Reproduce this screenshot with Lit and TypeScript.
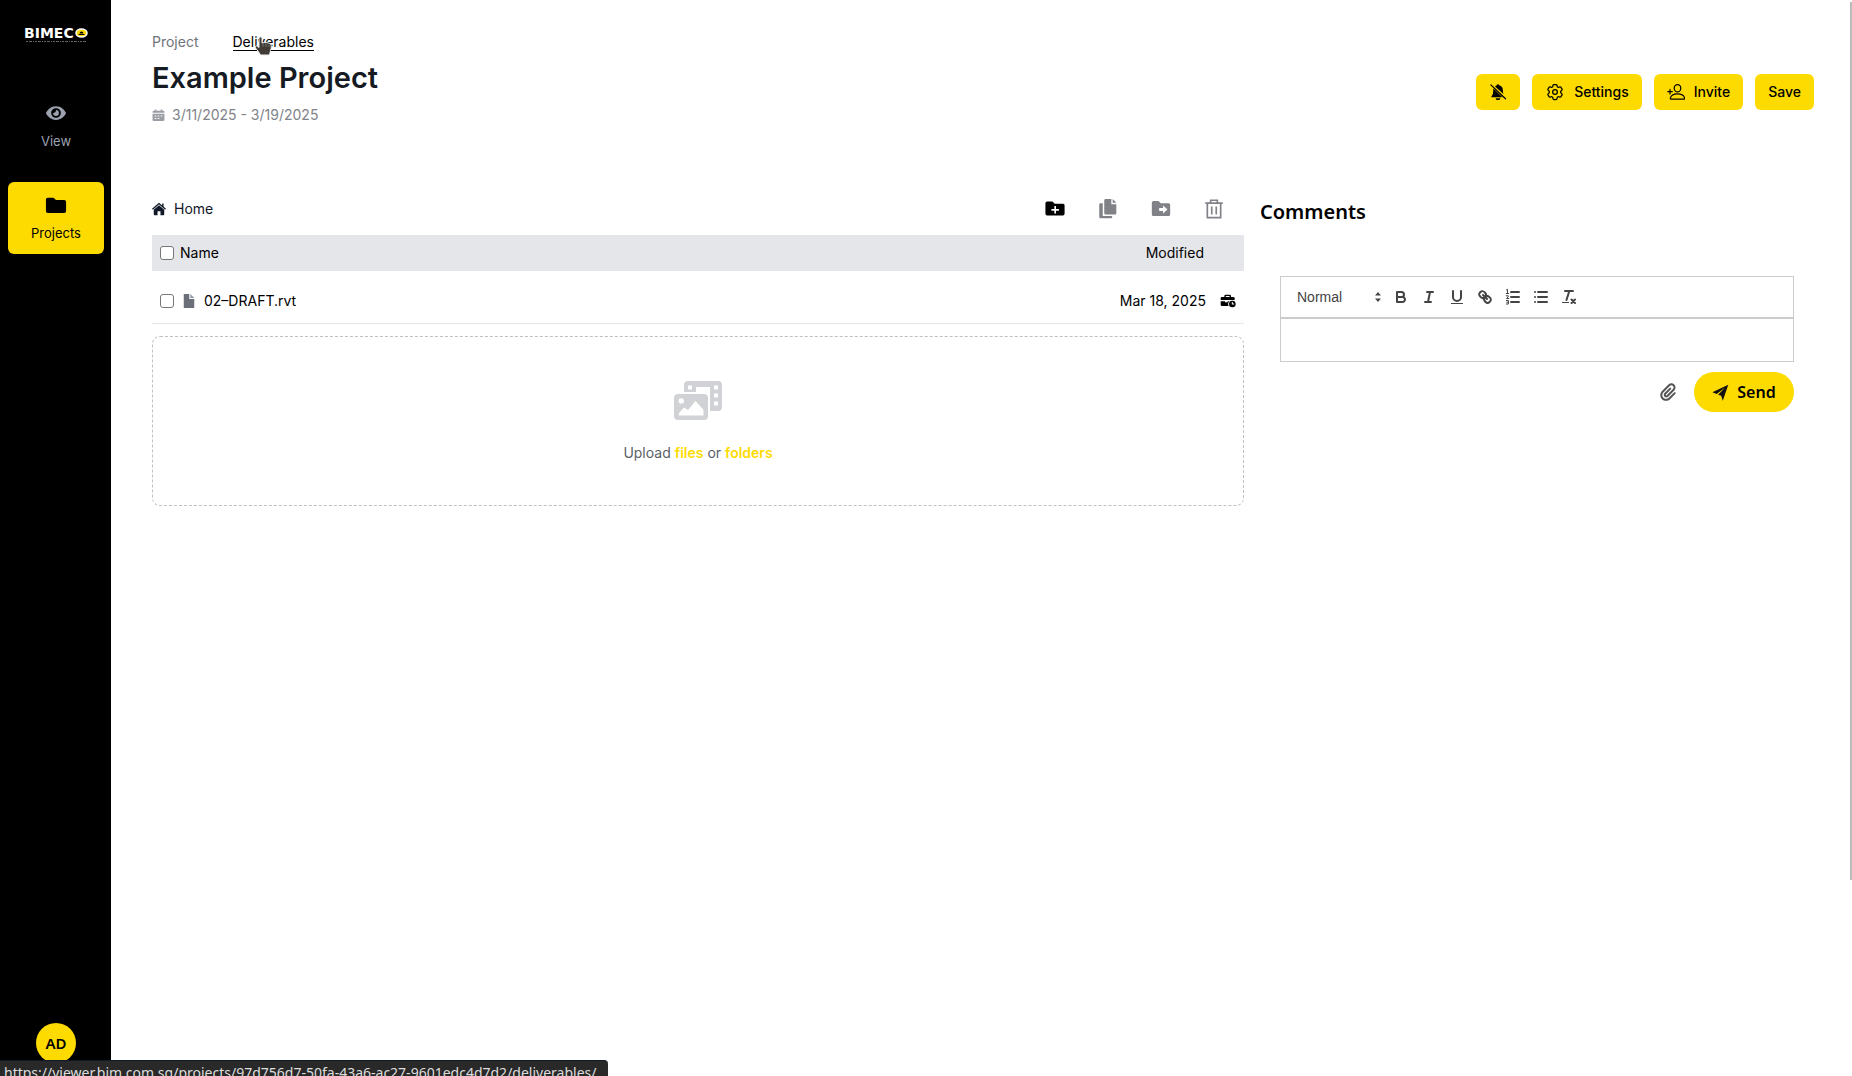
import { LitElement, html, css, svg } from "lit";
import { customElement, state } from "lit/decorators.js";

const icons = {
  eye: svg`<path fill-rule="evenodd" d="M12 4.500C6.500 4.500 2.500 8.500 1 12c1.500 3.500 5.500 7.500 11 7.500s9.500-4 11-7.500c-1.500-3.500-5.500-7.500-11-7.500Zm0 2.200a5.300 5.300 0 1 1 0 10.600 5.300 5.300 0 0 1 0-10.600Z"/><path d="M12 8.800c0 2-1.300 3.200-3.200 3.200a3.200 3.200 0 1 0 3.200-3.200Z"/>`,
  folder: svg`<path d="M3 4h6.200l2.800 2.600h9A2 2 0 0 1 23 8.600v10a2 2 0 0 1-2 2H3a2 2 0 0 1-2-2V6a2 2 0 0 1 2-2Z"/>`,
  calendar: svg`<path fill-rule="evenodd" d="M5 1h3v2h8V1h3v2h1.500A2.500 2.500 0 0 1 23 5.500V7H1V5.500A2.500 2.500 0 0 1 3.500 3H5ZM1 8.700h22v11a2.500 2.500 0 0 1-2.500 2.500h-17A2.500 2.500 0 0 1 1 19.700ZM5 12v2h3v-2Zm5.500 0v2h3v-2Zm5.500 0v2h3v-2ZM5 16.500v2h3v-2Zm5.500 0v2h3v-2Z"/>`,
  house: svg`<path d="M12 5.500 21 13.200V21a1.500 1.500 0 0 1-1.500 1.500H14.500V16h-5v6.500H4.500A1.500 1.500 0 0 1 3 21v-7.800Z"/><path d="M.8 12.300 12 2.700l11.200 9.600M18.700 2.500v6" fill="none" stroke="currentColor" stroke-width="2.400"/>`,
  bellOff: svg`<path d="M12 1.500a1.600 1.600 0 0 1 1.600 1.600C17 4 18.500 6.500 18.500 10c0 2 .3 3.500.8 4.800L8 4.500c.7-.7 1.500-1.100 2.400-1.400A1.600 1.600 0 0 1 12 1.500ZM6 7.200 17.800 19H3c0-1 .6-1.700 1.300-2.600C5.400 15 5.600 12.500 5.600 10c0-1 .1-2 .4-2.800ZM8.800 20.200h6.400a3.200 2.600 0 0 1-6.400 0Z"/><path d="M2.500 2.500 22 21" fill="none" stroke="currentColor" stroke-width="1.700" stroke-linecap="round"/>`,
  cog: svg`<g fill="none" stroke="currentColor" stroke-width="1.500" stroke-linejoin="round"><path d="M9.594 3.940c.09-.542.56-.94 1.110-.94h2.593c.55 0 1.020.398 1.110.94l.213 1.281c.063.374.313.686.645.87.074.04.147.083.22.127.325.196.72.257 1.075.124l1.217-.456a1.125 1.125 0 0 1 1.370.49l1.296 2.247a1.125 1.125 0 0 1-.26 1.431l-1.003.827c-.293.241-.438.613-.43.992a7.723 7.723 0 0 1 0 .255c-.008.378.137.75.43.991l1.004.827c.424.35.534.955.26 1.430l-1.298 2.247a1.125 1.125 0 0 1-1.369.491l-1.217-.456c-.355-.133-.75-.072-1.076.124a6.470 6.470 0 0 1-.22.128c-.331.183-.581.495-.644.869l-.213 1.281c-.09.543-.56.94-1.110.94h-2.594c-.55 0-1.019-.398-1.110-.94l-.213-1.281c-.062-.374-.312-.686-.644-.87a6.520 6.520 0 0 1-.22-.127c-.325-.196-.72-.257-1.076-.124l-1.217.456a1.125 1.125 0 0 1-1.369-.49l-1.297-2.247a1.125 1.125 0 0 1 .26-1.431l1.004-.827c.292-.24.437-.613.43-.991a6.932 6.932 0 0 1 0-.255c.007-.38-.138-.751-.43-.992l-1.004-.827a1.125 1.125 0 0 1-.26-1.430l1.297-2.247a1.125 1.125 0 0 1 1.370-.491l1.216.456c.356.133.751.072 1.076-.124.072-.044.146-.086.22-.128.332-.183.582-.495.644-.869l.214-1.280Z"/><circle cx="12" cy="12" r="2.800"/></g>`,
  personAdd: svg`<g fill="none" stroke="currentColor" stroke-width="1.600" stroke-linecap="round" stroke-linejoin="round"><ellipse cx="14" cy="7" rx="4.400" ry="4.900"/><path d="M5.500 21.500c-.8 0-1.200-.6-1-1.400.8-3.800 5-5.600 9.500-5.600s8.700 1.800 9.500 5.600c.2.800-.2 1.400-1 1.400ZM4 8.500v6M1 11.500h6"/></g>`,
  folderPlus: svg`<path fill-rule="evenodd" d="M3 3h6l2.700 2.600H21A2.200 2.200 0 0 1 23.500 8v9.500a2.300 2.300 0 0 1-2.500 2.300H3a2.300 2.300 0 0 1-2.500-2.300V5.300A2.300 2.300 0 0 1 3 3Zm8.200 5.500V12H7.700v2h3.500v3.500h2V14h3.500v-2h-3.500V8.500Z"/>`,
  copy: svg`<path d="M9 0h7v6.200h6V17a1.500 1.500 0 0 1-1.500 1.500H9A1.500 1.500 0 0 1 7.500 17V1.500A1.500 1.500 0 0 1 9 0Zm8.600 0L22 4.600h-4.400ZM1.500 6.500A1.500 1.500 0 0 1 3 5h2.700v15.300H17v1.500A1.500 1.500 0 0 1 15.500 23H3a1.500 1.500 0 0 1-1.500-1.500Z"/>`,
  folderMove: svg`<path fill-rule="evenodd" d="M3 2.500h6L11.700 5H21a2 2 0 0 1 2 2v11.500a2 2 0 0 1-2 2H3a2 2 0 0 1-2-2v-14a2 2 0 0 1 2-2Zm11.500 5.200v3H9.800v3.600h4.700v3l5.300-4.800Z"/>`,
  trash: svg`<path d="M1.500 5h21M8 5V1.500h8V5M4 5v17.300h16V5M9.300 9v9.500M14.700 9v9.500" fill="none" stroke="currentColor" stroke-width="2"/>`,
  file: svg`<path d="M3 0h9.500v8.500H21v14a1.500 1.500 0 0 1-1.500 1.500h-15A1.500 1.500 0 0 1 3 22.500Z"/><path d="M14.500 0 21 6.800h-6.500Z" opacity=".75"/>`,
  briefcase: svg`<path fill-rule="evenodd" d="M8.500 2.500h6A2 2 0 0 1 16.500 4.500V6H20a2 2 0 0 1 2 2v2.500H1V8a2 2 0 0 1 2-2h3.500V4.500a2 2 0 0 1 2-2Zm.2 2V6h5.600V4.500ZM1 12.200h6.500V14h4v-1.800h2.800a6 6 0 0 0-1.300 7.300H3a2 2 0 0 1-2-2Z"/><path fill-rule="evenodd" d="M18.500 11.500a5 5 0 1 1 0 10 5 5 0 0 1 0-10Zm-.8 2v3.800h3.500v-1.400h-2v-2.400Z"/>`,
  media: svg`<path fill-rule="evenodd" d="M14 1h30a4 4 0 0 1 4 4v22a4 4 0 0 1-4 4h-8V7H22v5H10V5a4 4 0 0 1 4-4Zm0 4.500v4h4v-4Zm26 0v4h4v-4Zm0 8v4h4v-4Zm0 8v4h4v-4Z"/><path fill-rule="evenodd" d="M4 14h26a4 4 0 0 1 4 4v18a4 4 0 0 1-4 4H4a4 4 0 0 1-4-4V18a4 4 0 0 1 4-4Zm3.300 4.200a2.700 2.700 0 1 0 0 5.400 2.700 2.700 0 0 0 0-5.400ZM5 35.500h24.500v-5.700L21.500 21 14 30l-4-2.500-5 5.500Z"/>`,
  clip: svg`<path d="M364.200 83.800c-24.400-24.400-64-24.400-88.400 0l-184 184c-42.100 42.100-42.100 110.300 0 152.400s110.300 42.100 152.400 0l152-152c10.900-10.900 28.700-10.900 39.600 0s10.900 28.700 0 39.600l-152 152c-64 64-167.600 64-231.600 0s-64-167.600 0-231.600l184-184c46.300-46.300 121.300-46.300 167.600 0s46.300 121.300 0 167.600l-176 176c-28.600 28.600-75 28.600-103.600 0s-28.600-75 0-103.600l144-144c10.900-10.900 28.700-10.900 39.600 0s10.900 28.700 0 39.600l-144 144c-6.700 6.700-6.700 17.700 0 24.400s17.700 6.700 24.400 0l176-176c24.400-24.400 24.400-64 0-88.400z"/>`,
  plane: svg`<path d="M23 1 .5 11.500l6.200 2.700L18.500 5 8.700 15.300 13 16.500l2.200 7Z"/>`,
  bold: svg`<path d="M5,4H9.500A2.500,2.500,0,0,1,12,6.500v0A2.500,2.500,0,0,1,9.500,9H5V4Z"/><path d="M5,9h5.500A2.500,2.500,0,0,1,13,11.500v0A2.500,2.500,0,0,1,10.500,14H5V9Z"/>`,
  italic: svg`<path d="M7 4h6M5 14h6M8 14l2-10"/>`,
  underline: svg`<path d="M5,3V9a4,4,0,0,0,8,0V3"/><rect class="solid" x="3" y="15" width="12" height="1"/>`,
  link: svg`<path d="M7 7l4 4M8.900,4.577a3.476,3.476,0,0,1,.36,4.679A3.476,3.476,0,0,1,4.577,8.900C3.185,7.500,2.035,6.400,4.217,4.217S7.500,3.185,8.900,4.577ZM13.423,9.100a3.476,3.476,0,0,0-4.679-.36,3.476,3.476,0,0,0,.36,4.679c1.392,1.392,2.500,2.542,4.679.36S14.815,10.500,13.423,9.100Z"/>`,
  ordered: svg`<path d="M7 4h8M7 9h8M7 14h8"/><path stroke-width="1" d="M2.500 1.800l1-.5V5.500M2.300 5.500h2.400M2.300 7.800h2v1l-1.800 1.700h2.300M2.400 12.500h2v3.500h-2M2.800 14.200h1.600"/>`,
  bullet: svg`<path d="M6 4h9M6 9h9M6 14h9M3 4h0M3 9h0M3 14h0"/>`,
  clean: svg`<path d="M5 3h8M6.500 12 9.300 3"/><path d="M11.500 11.500l3.500 3.500M15 11.500l-3.500 3.500"/><rect class="solid" x="2" y="14" width="7" height="1"/>`,
};

const icon = (body: unknown, size: string, box = "0 0 24 24") =>
  html`<svg class="icon ${size}" viewBox=${box} aria-hidden="true">${body}</svg>`;

@customElement("side-nav")
class SideNav extends LitElement {
  static styles = css`
    :host { display: flex; flex: 0 0 111px; flex-direction: column; align-items: center; background: #000; box-sizing: border-box; padding: 27px 7px 13px 8px; font-family: Inter, "Liberation Sans", sans-serif; }
    .icon { fill: currentColor; display: block; width: 22px; height: 22px; }
    .logo { display: flex; flex-direction: column; gap: 1px; text-decoration: none; color: #fff; width: 64px; margin-bottom: 47px; }
    .word { display: flex; align-items: center; justify-content: space-between; font: 700 14px/12px "DejaVu Sans", sans-serif; }
    .badge { flex: none; width: 13px; height: 10px; }
    .tag { width: 60px; height: 3px; margin: 0 auto; }
    .item { display: flex; flex-direction: column; align-items: center; justify-content: center; gap: 7px; width: 96px; height: 72px; border-radius: 6px; color: #9ca3af; font-size: 13px; line-height: 20px; text-decoration: none; box-sizing: border-box; }
    .item + .item { margin-top: 20px; }
    .current { background: #fedb00; color: #000; }
    .avatar { margin-top: auto; width: 40px; height: 40px; border: 0; border-radius: 50%; background: #fedb00; color: #000; font: 600 15px/20px "Noto Sans", sans-serif; padding: 0; }
  `;
  render() {
    return html`
      <a class="logo" href="#" aria-label="BIMECO">
        <span class="word">BIMEC<svg class="badge" viewBox="0 0 13 10"><ellipse cx="6.500" cy="5" rx="5.500" ry="4" fill="#fedb00" stroke="#fff" stroke-width="1.500"/><path d="M3.500 6h6v1h-6ZM4.500 5.500a2 2 0 0 1 4 0Z"/></svg></span>
        <svg class="tag" viewBox="0 0 60 3"><path d="M0 1.500h60" stroke="#666" stroke-width="1" stroke-dasharray="2 1 3 1 1 1"/></svg>
      </a>
      <a class="item" href="#view">${icon(icons.eye, "")}View</a>
      <a class="item current" href="#projects" aria-current="page">${icon(icons.folder, "")}Projects</a>
      <button class="avatar" aria-label="Account AD">AD</button>
    `;
  }
}

@customElement("comment-box")
class CommentBox extends LitElement {
  static styles = css`
    :host { display: block; padding-top: 8px; font-family: "Noto Sans", "Open Sans", sans-serif; }
    .title { margin: 0 0 50px; font-size: 20px; font-weight: 600; line-height: 28px; color: #000; }
    .editor { margin: 0 20px 10px; }
    .bar { display: flex; align-items: center; padding: 8px; border: 1px solid #ccc; }
    .picker { position: relative; width: 98px; height: 24px; }
    .picker select { appearance: none; width: 100%; height: 24px; border: 0; background: none; padding: 0 8px; color: #444; font: 500 14px/24px "Liberation Sans", Arial, sans-serif; }
    .picker .icon { position: absolute; right: 0; top: 3px; fill: #444; stroke: none; pointer-events: none; }
    .tool { width: 28px; height: 24px; padding: 3px 5px; border: 0; background: none; }
    .icon { display: block; width: 18px; height: 18px; fill: none; stroke: #444; stroke-width: 2; stroke-linecap: round; stroke-linejoin: round; }
    .solid { fill: #444; stroke: none; }
    .text { display: block; box-sizing: border-box; width: 100%; height: 44px; padding: 12px 15px; border: 1px solid #ccc; resize: none; background: #fff; font: 13px/18px "Liberation Sans", sans-serif; outline: 0; }
    .actions { display: flex; align-items: center; justify-content: flex-end; gap: 10px; margin: 0 20px; }
    .attach { border: 0; background: none; padding: 8px; }
    .clip { width: 16px; height: 18px; fill: #555; stroke: none; }
    .plane { width: 17px; height: 19px; fill: #111; stroke: none; }
    .send { display: flex; align-items: center; justify-content: center; gap: 8px; width: 100px; height: 40px; padding: 0; border: 0; border-radius: 20px; background: #fedb00; color: #000; font: 600 16px/24px "Noto Sans", sans-serif; }
  `;
  render() {
    const tools: [string, unknown][] = [
      ["Bold", icons.bold], ["Italic", icons.italic], ["Underline", icons.underline], ["Link", icons.link],
      ["Numbered list", icons.ordered], ["Bulleted list", icons.bullet], ["Clear formatting", icons.clean],
    ];
    return html`
      <h2 class="title">Comments</h2>
      <div class="editor">
        <div class="bar">
          <div class="picker">
            <select aria-label="Text style"><option>Normal</option></select>
            <svg class="icon" viewBox="0 0 18 18" aria-hidden="true"><path d="M6 10.500h6L9 14ZM6 7.500h6L9 4Z"/></svg>
          </div>
          ${tools.map(([label, body]) => html`<button class="tool" aria-label=${label}>${icon(body, "", "0 0 18 18")}</button>`)}
        </div>
        <textarea class="text" aria-label="Comment"></textarea>
      </div>
      <div class="actions">
        <button class="attach" aria-label="Attach file">${icon(icons.clip, "clip", "0 0 448 512")}</button>
        <button class="send">${icon(icons.plane, "plane")}Send</button>
      </div>
    `;
  }
}

@customElement("file-browser")
class FileBrowser extends LitElement {
  @state() private files = [{ name: "02–DRAFT.rvt", modified: "Mar 18, 2025" }];
  static styles = css`
    :host { display: block; color: #111; font-size: 14px; line-height: 24px; }
    .icon { display: block; flex: none; fill: currentColor; }
    .bar { display: flex; align-items: center; justify-content: space-between; height: 38px; padding-right: 16px; margin-bottom: 7px; }
    .home { display: flex; align-items: center; gap: 8px; color: #111827; text-decoration: none; }
    .s14 { width: 14px; height: 14px; }
    .s16 { width: 16px; height: 16px; }
    .s20 { width: 20px; height: 20px; }
    .tools { display: flex; gap: 25px; }
    .tool { padding: 4px; border: 0; background: none; color: #000; }
    .tool:disabled { color: #808287; }
    .table { width: 100%; border-collapse: collapse; }
    .table th { height: 36px; padding: 0; background: #e5e6ea; font-weight: 400; text-align: left; color: #000; }
    .table td { height: 52px; padding: 8px 0 0; box-sizing: border-box; border-bottom: 1px solid #e5e6e8; color: #000; }
    .table .date { text-align: right; width: 200px; padding-right: 40px; }
    .table .stamp { text-align: right; }
    .name { display: flex; align-items: center; padding-left: 8px; }
    .name .icon { margin: 0 8px 0 2px; color: #6b7078; }
    .check { appearance: none; width: 14px; height: 14px; margin: 0 6px 0 0; border: 1px solid #767676; border-radius: 3px; background: #fff; box-sizing: border-box; }
    .when { display: flex; justify-content: flex-end; align-items: center; gap: 14px; padding-right: 8px; }
    .drop { display: flex; flex-direction: column; align-items: center; justify-content: center; gap: 20px; height: 170px; margin-top: 12px; padding-top: 4px; border: 1px dashed #c0c0c0; border-radius: 8px; box-sizing: border-box; color: #5b5f66; }
    .media { width: 48px; height: 41px; color: #d1d2d5; }
    .drop p { margin: 0; }
    .pick { padding: 0; border: 0; background: none; color: #fedb00; font: inherit; font-weight: 600; }
  `;
  render() {
    return html`
      <div class="bar">
        <a class="home" href="#home">${icon(icons.house, "s14")}Home</a>
        <div class="tools">
          <button class="tool" aria-label="New folder">${icon(icons.folderPlus, "s20")}</button>
          <button class="tool" aria-label="Copy" disabled>${icon(icons.copy, "s20")}</button>
          <button class="tool" aria-label="Move" disabled>${icon(icons.folderMove, "s20")}</button>
          <button class="tool" aria-label="Delete" disabled>${icon(icons.trash, "s20")}</button>
        </div>
      </div>
      <table class="table">
        <thead><tr>
          <th><label class="name"><input class="check" type="checkbox" />Name</label></th>
          <th class="date">Modified</th>
        </tr></thead>
        <tbody>${this.files.map((f) => html`<tr>
          <td><label class="name"><input class="check" type="checkbox" />${icon(icons.file, "s14")}${f.name}</label></td>
          <td class="stamp"><div class="when">${f.modified}${icon(icons.briefcase, "s16")}</div></td>
        </tr>`)}</tbody>
      </table>
      <div class="drop">
        ${icon(icons.media, "media", "0 0 48 41")}
        <p>Upload <button class="pick">files</button> or <button class="pick">folders</button></p>
      </div>
    `;
  }
}

@customElement("app-root")
class AppRoot extends LitElement {
  static styles = css`
    :host { display: flex; position: relative; min-height: 100vh; overflow: hidden; background: #fff; font-family: Inter, "Liberation Sans", sans-serif; }
    .icon { display: block; flex: none; fill: currentColor; }
    .main { flex: 1; min-width: 0; padding: 34px 38px 40px 41px; }
    .head { display: flex; align-items: flex-start; justify-content: space-between; margin-bottom: 63px; }
    .tabs { display: flex; gap: 34px; font-size: 14px; line-height: 16px; margin-bottom: 8px; }
    .tab { color: #6f737a; text-decoration: none; border-bottom: 1px solid transparent; }
    .on { position: relative; color: #000; border-color: #000; }
    .hand { position: absolute; left: 21px; top: 2px; width: 18px; height: 20px; }
    .title { margin: 0; font-size: 29px; font-weight: 600; line-height: 38px; color: #151a23; }
    .dates { display: flex; align-items: center; gap: 7px; margin: 6px 0 0; color: #80838a; font-size: 14px; line-height: 24px; }
    .dates .icon { color: #9a9da3; }
    .s13 { width: 13px; height: 13px; }
    .s18 { width: 18px; height: 18px; }
    .s20 { width: 20px; height: 20px; }
    .buttons { display: flex; gap: 12px; margin-top: 40px; }
    .btn { display: flex; align-items: center; gap: 9px; height: 36px; padding: 0 13px; border: 0; border-radius: 6px; background: #fedb00; color: #000; font: 500 14px/20px Inter, sans-serif; }
    .columns { display: grid; grid-template-columns: minmax(0, 1092fr) minmax(0, 554fr); gap: 16px; }
    .rail { position: absolute; top: 2px; right: 0; width: 2px; height: 878px; background: #bbb; }
    .status { position: absolute; left: 0; bottom: 0; height: 16px; overflow: hidden; box-sizing: border-box; padding: 1px 12px 0 4px; background: #292929; border-top: 1px solid #111827; border-top-right-radius: 4px; color: #ddd; font: 14px/22px "Noto Sans", sans-serif; }
  `;
  render() {
    return html`
      <side-nav></side-nav>
      <main class="main">
        <header class="head">
          <div>
            <nav class="tabs">
              <a class="tab" href="#project">Project</a>
              <a class="tab on" href="#deliverables">Deliverables
                <svg class="hand" viewBox="0 0 18 20" aria-hidden="true"><path d="M5 2.500c0-2 3-2 3 0V7c2-1 8-.5 9 1.500.6 1.500.3 4-.5 6l-1 4.500H6.500L5 16.500 1.500 12c-1-1.500.8-2.800 2-1.700L5 11.500Z" fill="#403c35" stroke="#eee" stroke-width="1"/><path d="M9 8v3M12 8v3M15 9v2" stroke="#77736b"/></svg>
              </a>
            </nav>
            <h1 class="title">Example Project</h1>
            <p class="dates">${icon(icons.calendar, "s13")}3/11/2025 - 3/19/2025</p>
          </div>
          <div class="buttons">
            <button class="btn" aria-label="Mute notifications">${icon(icons.bellOff, "s18")}</button>
            <button class="btn">${icon(icons.cog, "s20")}Settings</button>
            <button class="btn">${icon(icons.personAdd, "s18")}Invite</button>
            <button class="btn">Save</button>
          </div>
        </header>
        <div class="columns">
          <file-browser></file-browser>
          <comment-box></comment-box>
        </div>
      </main>
      <div class="rail"></div>
      <div class="status">https://viewer.bim.com.sg/projects/97d756d7-50fa-43a6-ac27-9601edc4d7d2/deliverables/</div>
    `;
  }
}
